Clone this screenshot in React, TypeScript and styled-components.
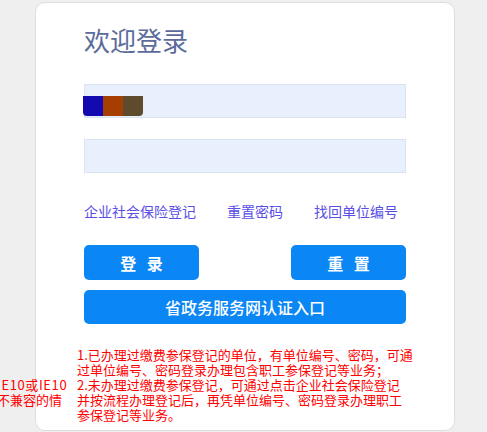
import React from "react";
import styled, { createGlobalStyle } from "styled-components";

const GlobalStyle = createGlobalStyle`
  html, body {
    margin: 0;
    padding: 0;
    background: #efefef;
    font-family: "Noto Sans CJK SC", "Noto Sans", sans-serif;
    overflow: hidden;
  }
`;

const Page = styled.div`
  position: relative;
  width: 487px;
  height: 432px;
  padding: 2px 0 0 35px;
  box-sizing: border-box;
`;

const Card = styled.div`
  width: 420px;
  height: 429px;
  box-sizing: border-box;
  background: #fff;
  border: 1px solid #dedede;
  border-radius: 10px;
  padding: 23px 48px 0 48px;
  display: flex;
  flex-direction: column;
`;

const Title = styled.h1`
  margin: 0;
  font-size: 26px;
  line-height: 28px;
  font-weight: 400;
  color: #5b6b9b;
`;

const Field = styled.div<{ top: number }>`
  position: relative;
  margin-top: ${({ top }) => top}px;
  height: 34px;
  box-sizing: border-box;
  background: #e8f0fe;
  border: 1px solid #dbe3f1;
`;

const Swatches = styled.div`
  position: absolute;
  left: -2px;
  top: 11px;
  display: flex;
  border-radius: 0 0 4px 4px;
  overflow: hidden;
`;

const Swatch = styled.span<{ color: string }>`
  width: 20px;
  height: 20px;
  background: ${({ color }) => color};
`;

const Links = styled.div`
  margin-top: 28px;
  display: flex;
  gap: 31px;
  font-size: 14px;
  line-height: 20px;
`;

const LinkText = styled.a`
  color: #5a4ee4;
  text-decoration: none;
  cursor: pointer;
`;

const ButtonRow = styled.div`
  margin-top: 24px;
  display: flex;
  justify-content: space-between;
`;

const Button = styled.button<{ wide?: boolean }>`
  width: ${({ wide }) => (wide ? "322px" : "115px")};
  height: ${({ wide }) => (wide ? "34px" : "35px")};
  margin-top: ${({ wide }) => (wide ? "10px" : "0")};
  border: none;
  border-radius: 5px;
  background: #0a86f5;
  color: #fff;
  font-family: "Noto Sans CJK SC", sans-serif;
  font-size: 16px;
  font-weight: ${({ wide }) => (wide ? 500 : 700)};
  letter-spacing: ${({ wide }) => (wide ? "0" : "3.5px")};
  padding: 0 0 0 ${({ wide }) => (wide ? "0" : "3.5px")};
  cursor: pointer;
`;

const Notice = styled.div`
  margin: 23px -7px 0 -7px;
  display: flex;
  flex-direction: column;
  font-size: 13px;
  color: #f00;
`;

const Line = styled.span<{ spread?: number }>`
  display: block;
  height: 15px;
  line-height: 15px;
  white-space: nowrap;
  letter-spacing: ${({ spread }) => spread ?? 0}px;
`;

const Compat = styled.div`
  position: absolute;
  left: -3px;
  top: 377px;
  font-size: 13px;
  color: #f00;
`;

export default function App() {
  return (
    <>
      <GlobalStyle />
      <Page>
        <Compat>
          <Line spread={0.6}>IE10或IE10</Line>
          <Line>不兼容的情</Line>
        </Compat>
        <Card>
          <Title>欢迎登录</Title>
          <Field top={30}>
            <Swatches>
              <Swatch color="#1309b1" />
              <Swatch color="#a63d02" />
              <Swatch color="#5e4a2c" />
            </Swatches>
          </Field>
          <Field top={21} />
          <Links>
            <LinkText>企业社会保险登记</LinkText>
            <LinkText>重置密码</LinkText>
            <LinkText>找回单位编号</LinkText>
          </Links>
          <ButtonRow>
            <Button>登 录</Button>
            <Button>重 置</Button>
          </ButtonRow>
          <Button wide>省政务服务网认证入口</Button>
          <Notice>
            <Line>1.已办理过缴费参保登记的单位，有单位编号、密码，可通</Line>
            <Line>过单位编号、密码登录办理包含职工参保登记等业务；</Line>
            <Line>2.未办理过缴费参保登记，可通过点击企业社会保险登记</Line>
            <Line>并按流程办理登记后，再凭单位编号、密码登录办理职工</Line>
            <Line>参保登记等业务。</Line>
          </Notice>
        </Card>
      </Page>
    </>
  );
}
